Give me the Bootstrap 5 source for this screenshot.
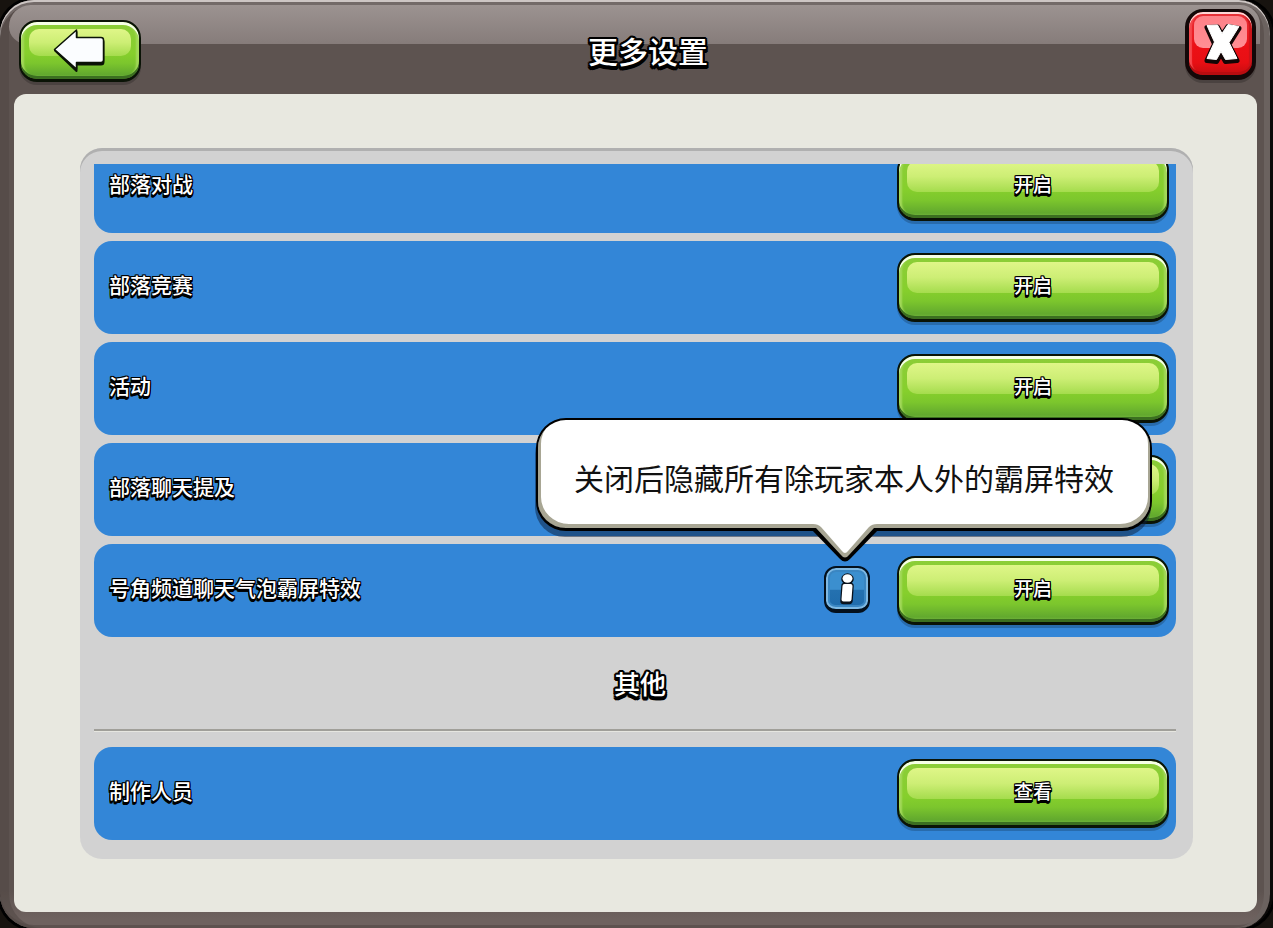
<!DOCTYPE html>
<html lang="zh-CN">
<head>
<meta charset="utf-8">
<meta name="viewport" content="width=device-width, initial-scale=1">
<title>更多设置</title>
<link href="https://cdn.jsdelivr.net/npm/bootstrap@5.3.0/dist/css/bootstrap.min.css" rel="stylesheet">
<style>
  body {
    background: #17130f;
    font-family: "Noto Sans CJK SC", sans-serif;
    font-weight: 500;
  }
  .game-frame {
    background: linear-gradient(#5d5350 0 96%, #6e625f 99%);
    border-radius: 34px;
    border-right: 3px solid #0c0a09;
    box-shadow: inset 0 2px 0 #cdc6c4, inset 0 5px 0 #736a68, inset 9px 0 0 #51474488, inset -6px 0 0 #6b625f, inset 0 -3px 0 #51474499, 0 0 0 3px #000;
    padding: 0 13px 16px 14px;
    isolation: isolate;
  }
  .frame-gloss {
    inset: 5px 10px auto 9px;
    height: 39px;
    border-radius: 22px 20px 0 18px;
    background: linear-gradient(#9c9391, #867c7a);
    z-index: -1;
  }
  .frame-header { height: 94px; padding: 0 1px 0 5px; }
  .frame-title { font-size: 30px; line-height: 36px; padding: 32px 30px 0 0; font-weight: 500; }
  .outlined {
    color: #fff;
    text-shadow: -1px -1px 0 #000, 1px -1px 0 #000, -1px 1px 0 #000, 1px 1px 0 #000,
      0 -1px 0 #000, -1px 0 0 #000, 1px 0 0 #000, -1px 2px 0 #000, 1px 2px 0 #000, 0 3px 0 #000, -1px 3px 0 #000;
  }
  .outlined-lg {
    color: #fff;
    text-shadow: -2px -1px 0 #000, 2px -1px 0 #000, 0 -2px 0 #000, -2px 1px 0 #000, 2px 1px 0 #000,
      -1px -2px 0 #000, 1px -2px 0 #000, -2px 3px 0 #000, 2px 3px 0 #000, 0 3px 0 #000, -1px 4px 0 #000, 1px 4px 0 #000;
  }
  .panel { background: #e8e8e0; border-radius: 12px; padding: 54px 64px 53px 66px; }
  .tray {
    background: #d2d2d2;
    border-radius: 22px;
    padding: 16px 17px 19px 14px;
    box-shadow: inset 0 3px 0 #b0b0b0;
  }
  .setting-scroll { height: 0; }
  .setting-list { gap: 8px; }
  .setting-row {
    height: 93px;
    border-radius: 18px;
    background: #3386d7;
    padding: 0 7px 0 15px;
    flex-shrink: 0;
  }
  .setting-label { font-size: 21px; line-height: 24px; padding-bottom: 7px; }
  .section-title { font-size: 26px; line-height: 92px; padding-left: 10px; font-weight: 500; }
  .section-rule { height: 3px; margin: 0 0 15px; border: 0; opacity: 1; background: linear-gradient(#a09f99 0 2px, #e6e6e0 2px); }

  .btn-game {
    position: relative;
    isolation: isolate;
    border: 2px solid #0a1306;
    border-bottom-width: 3px;
    border-radius: 18px;
    padding: 0;
    background: linear-gradient(#8ccd38, #86cf2c 55%, #7cc62d 72%, #62a92e 92%, #79bb43);
    box-shadow: inset 0 3px 0 #f6ffe6, inset 0 -3px 0 #3b6f20, inset 3px 0 2px #a3d95a, inset -3px 0 2px #a3d95a, 0 3px 0 #0003;
  }
  .btn-game::before {
    content: "";
    position: absolute;
    z-index: -1;
    inset: 7px 8px 40%;
    border-radius: 10px;
    background: linear-gradient(#dff688, #cdee75 50%, #a5dc4d);
  }
  .btn-toggle { width: 272px; height: 69px; font-size: 19px; line-height: 24px; font-weight: 500; padding-bottom: 4px; }
  .btn-back { width: 122px; height: 62px; margin-top: 20px; }
  .btn-shut {
    width: 71px; height: 71px; margin-top: 9px;
    border-width: 3px 4px 5px;
    border-color: #130808;
    background: linear-gradient(#e8333a, #ec1016 55%, #e80f14 80%, #c40d10);
    box-shadow: inset 0 2px 0 #ffd5d5, inset 0 -3px 0 #b80c10, inset 3px 0 1px #f5484d, inset -3px 0 1px #c9151a, 0 3px 0 #0003;
  }
  .btn-shut::before { inset: 4px 5px 43%; border-radius: 9px; background: linear-gradient(#ff8188, #ff8f94); }
  .btn-about {
    width: 46px; height: 47px;
    border: 2px solid #04101c;
    border-bottom-width: 4px;
    border-radius: 12px;
    background: linear-gradient(#3b8fcf 0 52%, #2471b0 54%, #1f6bab);
    box-shadow: inset 0 0 0 2px #7fb9e3, inset 0 0 0 4px #3a86c2;
  }
  .about-wrap { margin-right: 27px; padding-bottom: 2px; }
  .tip-bubble {
    right: -282px;
    bottom: calc(100% + 35px);
    z-index: 3;
    padding: 0 36px;
    height: 113px;
    border: solid #000;
    border-width: 2px 2px 3px;
    border-radius: 30px;
    background: #fff;
    box-shadow: inset 3px -4px 0 #a8a694, inset -2px -4px 0 #a8a694, -1px 6px 0 #0b1e3b80;
    color: #111;
    font-size: 30px;
    line-height: 114px;
    font-weight: 400;
  }
  .tip-arrow { left: 50%; top: calc(100% - 4px); margin-left: -40px; }
</style>
</head>
<body class="vh-100 overflow-hidden">
<main class="game-frame position-relative d-flex flex-column h-100">
  <div class="frame-gloss position-absolute"></div>
  <header class="frame-header d-flex align-items-start">
    <button type="button" class="btn-game btn-back d-flex align-items-center justify-content-center" aria-label="返回">
      <svg width="56" height="46" viewBox="0 0 56 46" aria-hidden="true">
        <path d="M3 22.500 24.500 4v7.500H49q2.500 0 2.500 2.500v20q0 2.500-2.500 2.500H24.500V43Z" fill="#0b1306" stroke="#0b1306" stroke-width="2" stroke-linejoin="round"/>
        <path d="M2.500 21.500 24.500 2v7.500H49q2.500 0 2.500 2.500v20q0 2.500-2.500 2.500H24.500V41Z" fill="#fbfdff" stroke="#0b1306" stroke-width="1.500" stroke-linejoin="round"/>
      </svg>
    </button>
    <h1 class="frame-title outlined-lg flex-grow-1 text-center m-0">更多设置</h1>
    <button type="button" class="btn-game btn-shut d-flex align-items-center justify-content-center" aria-label="关闭">
      <svg width="42" height="44" viewBox="0 0 42 44" aria-hidden="true">
        <g stroke-linejoin="round">
          <path d="M7 5.500 17.500 5 22 13.500 28 4.500 39 6.500 29 22.500 37 38.500 25.500 39.500 21 31.500 16.500 39.500 7 38.500 14.500 22Z" fill="#120606" stroke="#120606" stroke-width="5"/>
          <path d="M7 3.500 17.500 3 22 11.500 28 2.500 39 4.500 29 20.500 37 36.500 25.500 37.500 21 29.500 16.500 37.500 7 36.500 14.500 20Z" fill="#fff" stroke="#fff" stroke-width="1"/>
        </g>
      </svg>
    </button>
  </header>

  <section class="panel d-flex flex-column flex-grow-1">
    <div class="tray d-flex flex-column flex-grow-1">
      <div class="setting-scroll d-flex flex-column justify-content-end flex-grow-1 overflow-hidden">
        <div class="setting-list d-flex flex-column">
          <div class="setting-row d-flex align-items-center">
            <span class="setting-label outlined me-auto" id="war">部落对战</span>
            <button type="button" class="btn-game btn-toggle outlined" aria-describedby="war">开启</button>
          </div>
          <div class="setting-row d-flex align-items-center">
            <span class="setting-label outlined me-auto" id="games">部落竞赛</span>
            <button type="button" class="btn-game btn-toggle outlined" aria-describedby="games">开启</button>
          </div>
          <div class="setting-row d-flex align-items-center">
            <span class="setting-label outlined me-auto" id="events">活动</span>
            <button type="button" class="btn-game btn-toggle outlined" aria-describedby="events">开启</button>
          </div>
          <div class="setting-row d-flex align-items-center">
            <span class="setting-label outlined me-auto" id="mention">部落聊天提及</span>
            <button type="button" class="btn-game btn-toggle" aria-describedby="mention" aria-label="开启"></button>
          </div>
          <div class="setting-row d-flex align-items-center">
            <span class="setting-label outlined me-auto" id="horn">号角频道聊天气泡霸屏特效</span>
            <div class="about-wrap position-relative">
              <button type="button" class="btn-about d-flex align-items-center justify-content-center p-0" aria-label="说明" aria-describedby="horn-tip">
                <svg width="20" height="34" viewBox="0 0 20 34" aria-hidden="true">
                  <g fill="#0a121c" stroke="#0a121c" stroke-width="2.500" stroke-linejoin="round">
                    <path d="M5.500 14q0-2 2-2h6q2 0 2 2l-1 15q-.2 2-2 2H6.500q-2 0-2-2Z"/>
                    <ellipse cx="10.500" cy="7" rx="5" ry="4.500"/>
                  </g>
                  <path d="M5.500 14q0-2 2-2h6q2 0 2 2l-1 13.500q-.2 2-2 2H6.500q-2 0-2-2Z" fill="#fff"/>
                  <ellipse cx="10.500" cy="6.500" rx="5" ry="4.200" fill="#fff"/>
                </svg>
              </button>
              <div class="tip-bubble position-absolute text-nowrap" role="tooltip" id="horn-tip">关闭后隐藏所有除玩家本人外的霸屏特效
                <svg class="tip-arrow position-absolute" width="82" height="40" viewBox="0 0 82 40" aria-hidden="true">
                  <path d="M6 4 36 35Q41 40 46 35L76 4Z" fill="#000"/>
                  <path d="M2 0Q8 0 12 4L37 31Q41 36 45 31L70 4Q74 0 80 0Z" fill="#a8a694"/>
                  <path d="M9 0Q14 0 17 3L38 27Q41 31 44 27L65 3Q68 0 73 0Z" fill="#fff"/>
                </svg>
              </div>
            </div>
            <button type="button" class="btn-game btn-toggle outlined" aria-describedby="horn">开启</button>
          </div>
        </div>
        <h2 class="section-title outlined-lg text-center m-0">其他</h2>
        <hr class="section-rule flex-shrink-0">
        <div class="setting-row d-flex align-items-center">
          <span class="setting-label outlined me-auto" id="credits">制作人员</span>
          <button type="button" class="btn-game btn-toggle outlined" aria-describedby="credits">查看</button>
        </div>
      </div>
    </div>
  </section>
</main>
<script src="https://cdn.jsdelivr.net/npm/bootstrap@5.3.0/dist/js/bootstrap.bundle.min.js"></script>
</body>
</html>
